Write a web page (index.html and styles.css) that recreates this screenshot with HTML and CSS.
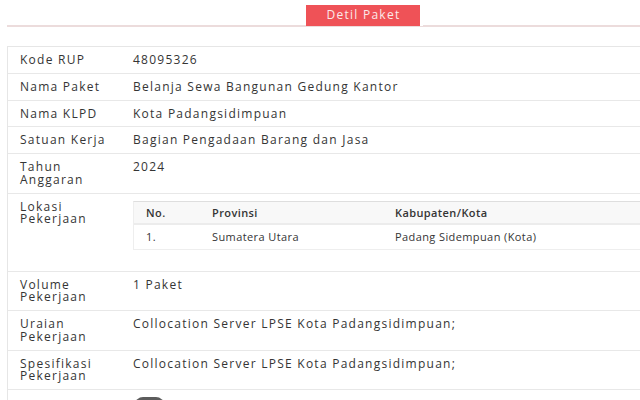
FILE: index.html
```html
<!DOCTYPE html>
<html lang="id">
<head>
    <meta charset="UTF-8">
    <meta name="viewport" content="width=device-width, initial-scale=1.0">
    <title>Detil Paket</title>
    <link rel="stylesheet" href="styles.css">
</head>
<body>
    <div class="page">
        <div class="tabs">
            <div class="tab active">Detil Paket</div>
        </div>

        <div class="detail">
            <div class="row">
                <div class="label">Kode RUP</div>
                <div class="value">48095326</div>
            </div>
            <div class="row">
                <div class="label">Nama Paket</div>
                <div class="value">Belanja Sewa Bangunan Gedung Kantor</div>
            </div>
            <div class="row">
                <div class="label">Nama KLPD</div>
                <div class="value">Kota Padangsidimpuan</div>
            </div>
            <div class="row">
                <div class="label">Satuan Kerja</div>
                <div class="value">Bagian Pengadaan Barang dan Jasa</div>
            </div>
            <div class="row">
                <div class="label">Tahun<br>Anggaran</div>
                <div class="value">2024</div>
            </div>
            <div class="row">
                <div class="label">Lokasi<br>Pekerjaan</div>
                <div class="value">
                    <table class="lokasi">
                        <thead>
                            <tr>
                                <th class="col-no">No.</th>
                                <th class="col-prov">Provinsi</th>
                                <th>Kabupaten/Kota</th>
                            </tr>
                        </thead>
                        <tbody>
                            <tr>
                                <td>1.</td>
                                <td>Sumatera Utara</td>
                                <td>Padang Sidempuan (Kota)</td>
                            </tr>
                        </tbody>
                    </table>
                </div>
            </div>
            <div class="row">
                <div class="label">Volume<br>Pekerjaan</div>
                <div class="value">1 Paket</div>
            </div>
            <div class="row">
                <div class="label">Uraian<br>Pekerjaan</div>
                <div class="value">Collocation Server LPSE Kota Padangsidimpuan;</div>
            </div>
            <div class="row">
                <div class="label">Spesifikasi<br>Pekerjaan</div>
                <div class="value">Collocation Server LPSE Kota Padangsidimpuan;</div>
            </div>
            <div class="row">
                <div class="label"></div>
                <div class="value"><span class="pill"></span></div>
            </div>
        </div>
    </div>
</body>
</html>
```

FILE: styles.css
```css
* {
    margin: 0;
    padding: 0;
    box-sizing: border-box;
}

html, body {
    overflow: hidden;
}

body {
    font-family: 'Open Sans', 'Noto Sans', sans-serif;
    font-size: 12px;
    letter-spacing: 1.25px;
    color: #353535;
    background: #fff;
}

.page {
    width: 712px;
    margin-left: 7px;
}

.tabs {
    display: flex;
    justify-content: center;
    height: 27px;
    padding-top: 5px;
    border-bottom: 2px solid #ecdcdc;
}

.tab {
    height: 21px;
    margin-bottom: -1px;
    padding: 0 20px 0 21px;
    line-height: 20px;
    color: #fbe9e9;
    font-size: 12px;
}

.tab.active {
    background: #ef5257;
    box-shadow: 3px 0 0 #fff;
}

.detail {
    margin-top: 19px;
    border-top: 1px solid #e6e6e6;
    border-left: 1px solid #e6e6e6;
}

.row {
    display: grid;
    grid-template-columns: 125px 1fr;
    border-bottom: 1px solid #e8e8e8;
    line-height: 12.75px;
}

.label,
.value {
    padding: 7px 0 6px;
}

.label {
    padding-left: 12px;
}

.lokasi {
    width: 100%;
    border-collapse: separate;
    border-spacing: 0;
    margin-bottom: 15px;
    font-size: 11px;
    letter-spacing: 0.4px;
    border-top: 1px solid #dedede;
    border-left: 1px solid #eeeeee;
    border-bottom: 1px solid #eeeeee;
}

.lokasi th {
    text-align: left;
    font-weight: 600;
    background: #f8f8f8;
    line-height: 21px;
    padding: 0 12px;
    border-bottom: 2px solid #ececec;
}

.lokasi td {
    line-height: 24px;
    padding: 0 12px;
}

.col-no {
    width: 66px;
}

.col-prov {
    width: 183px;
}

.pill {
    display: inline-block;
    width: 29px;
    height: 16px;
    margin-left: 2px;
    border-radius: 8px;
    background: #5c5c5c;
    vertical-align: top;
}
```
